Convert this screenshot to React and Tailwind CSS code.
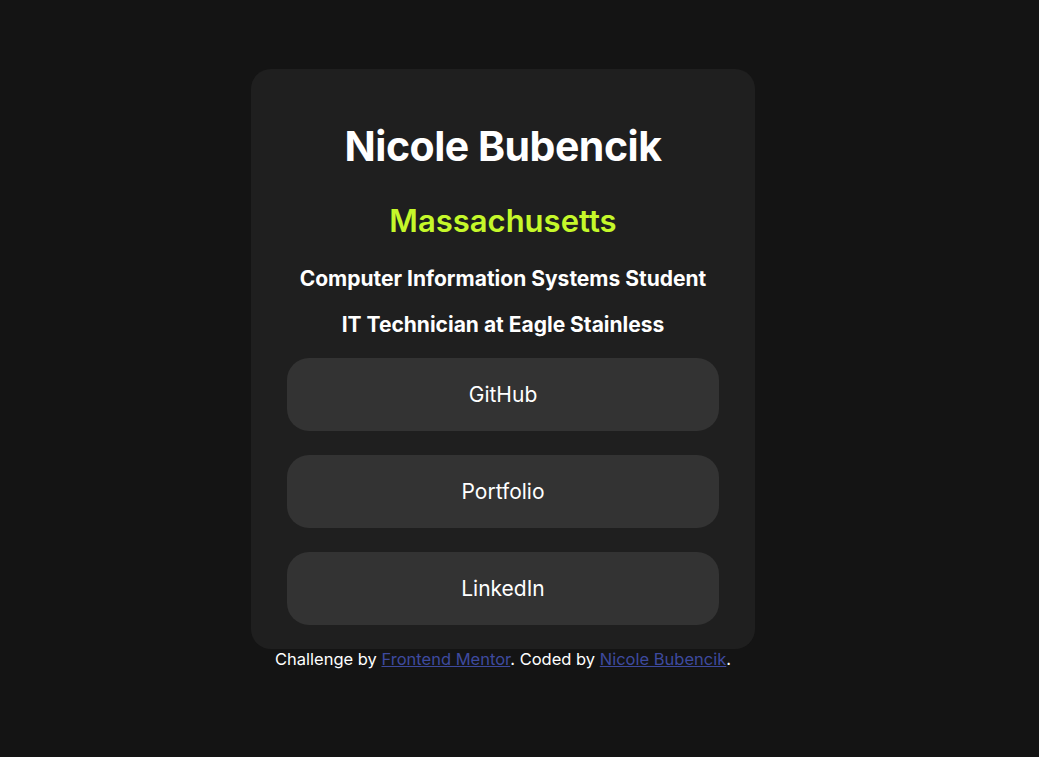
export default function App() {
  const links = ['GitHub', 'Portfolio', 'LinkedIn'];

  return (
    <div className="min-h-screen bg-[#141414] flex flex-col items-center pt-[69px] pr-[33px] font-['Inter','Noto_Sans',sans-serif] text-white">
      <div className="w-[504px] bg-[#1f1f1f] rounded-[20px] px-9 pt-[53px] pb-6 flex flex-col items-center">
        <h1 className="text-[41px] font-bold leading-[1.2] tracking-[-0.5px]">Nicole Bubencik</h1>
        <h2 className="mt-[31px] text-[31px] font-semibold text-[#c5f82a] leading-[1.2]">Massachusetts</h2>
        <p className="mt-[25px] text-[21px] font-bold leading-[1.4]">Computer Information Systems Student</p>
        <p className="mt-[16px] text-[21px] font-bold leading-[1.4]">IT Technician at Eagle Stainless</p>
        <div className="mt-[19px] w-full flex flex-col gap-6">
          {links.map((l) => (
            <a key={l} href="#" className="h-[73px] w-full bg-[#333333] rounded-[22px] flex items-center justify-center text-[21px]">
              {l}
            </a>
          ))}
        </div>
      </div>
      <p className="text-[16.5px] leading-5">
        Challenge by <a href="#" className="underline text-[#3e4a9e]">Frontend Mentor</a>. Coded by{' '}
        <a href="#" className="underline text-[#3e4a9e]">Nicole Bubencik</a>.
      </p>
    </div>
  );
}
